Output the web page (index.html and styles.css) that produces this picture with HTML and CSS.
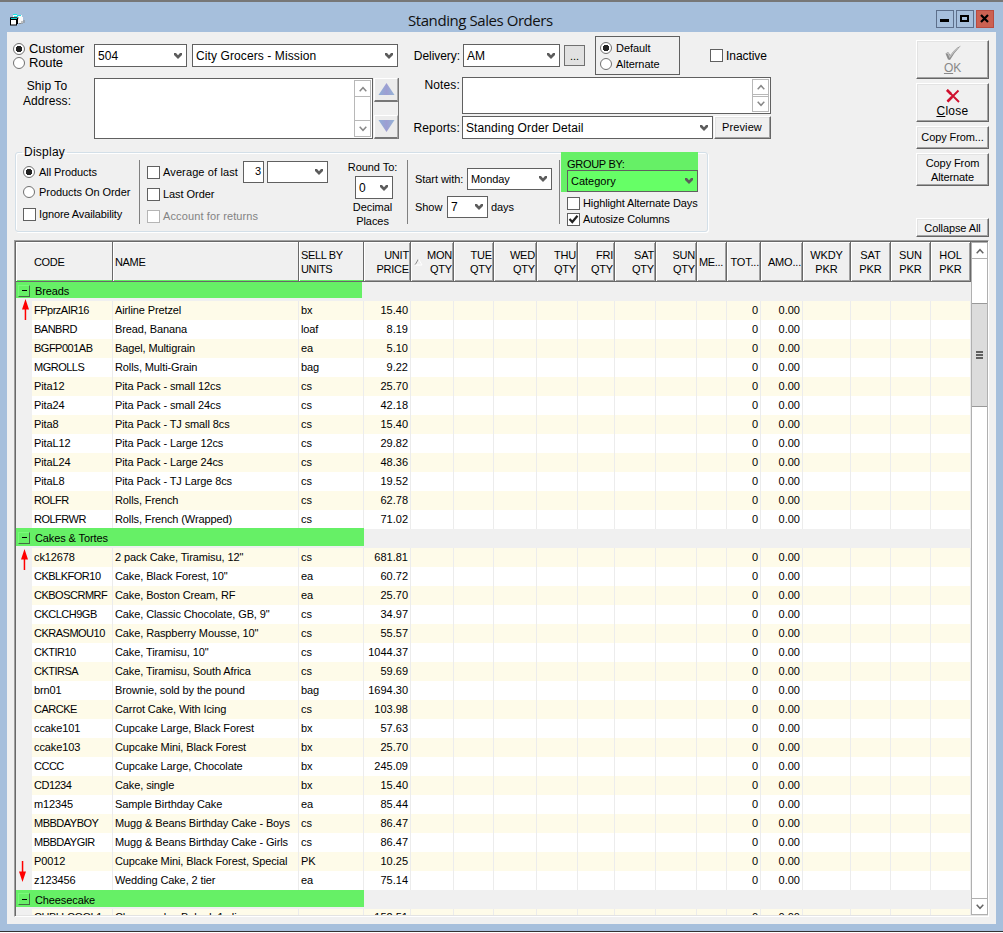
FILE: index.html
```html
<!DOCTYPE html>
<html lang="en">
<head>
<meta charset="utf-8">
<title>Standing Sales Orders</title>
<link rel="stylesheet" href="styles.css">
</head>
<body>
<svg width="0" height="0" class="defs">
  <symbol id="chev" viewBox="0 0 8 6"><path d="M0 0H2L4 2.2L6 0H8V2L4 6L0 2Z" fill="#5c5c5c"/></symbol>
  <symbol id="thin" viewBox="0 0 8 6"><path d="M.7 .8L4 4.3L7.3 .8" fill="none" stroke="currentColor" stroke-width="1.5"/></symbol>
  <symbol id="up" viewBox="0 0 7 21"><path d="M3.5 0L7 10.5H0Z M2.7 10H4.2V21H2.7Z" fill="#f00"/></symbol>
</svg>
<div class="window">
  <header class="titlebar">
    <svg class="appicon" width="17" height="14" viewBox="0 0 17 14">
      <path d="M4 2H13V4H14V10H9V6H4Z" fill="#f8f8f8"/><path d="M4 1.500H8M8 2.500H12M5 3.500H9" stroke="#1fe8e8"/>
      <path d="M13 8V11M15 7V10M10 10.500H12" stroke="#888"/>
      <rect x="1.500" y="4.500" width="8" height="1" fill="#000"/><path d="M8.500 5V11" stroke="#000"/>
      <rect x="1.500" y="5" width="6" height="7" fill="#fff" stroke="#000"/><path d="M2 5.500H8" stroke="#0cc"/><path d="M1 6.500H8" stroke="#000"/>
    </svg>
    <h1 class="title">Standing Sales Orders</h1>
    <div class="winbtns">
      <span class="winbtn"><svg width="16" height="16"><path d="M3 8H12V11H3Z"/></svg></span>
      <span class="winbtn"><svg width="16" height="16"><path d="M4 5H11V10H4Z" fill="none" stroke="#000" stroke-width="2"/></svg></span>
      <span class="winbtn close"><svg width="16" height="16"><path d="M4 4L11 11M11 4L4 11" stroke="#000" stroke-width="2.200"/></svg></span>
    </div>
  </header>
  <main class="panel">
    <section class="form">
      <div class="left">
        <div class="line1">
          <div class="mode">
            <label class="opt big"><i class="radio on"></i>Customer</label>
            <label class="opt big"><i class="radio"></i>Route</label>
          </div>
          <div class="combo w504"><span>504</span><svg class="chev"><use href="#chev"/></svg></div>
          <div class="combo wcust"><span>City Grocers - Mission</span><svg class="chev"><use href="#chev"/></svg></div>
        </div>
        <div class="line2">
          <div class="shipto">Ship To<br>Address:</div>
          <div class="area ship"><div class="sb"><b><svg><use href="#thin" class="flip"/></svg></b><b><svg><use href="#thin"/></svg></b></div></div>
          <div class="arrows">
            <b class="raised"><svg width="17" height="13"><path d="M8.500 0L16.500 12H.5Z" fill="url(#g1)"/><defs><linearGradient id="g1"><stop stop-color="#8fb0d8"/><stop offset=".5" stop-color="#9d9ed2"/><stop offset="1" stop-color="#94b4d6"/></linearGradient></defs></svg></b>
            <b class="raised"><svg width="17" height="13"><path d="M.5 0H16.500L8.500 12Z" fill="url(#g1)"/></svg></b>
          </div>
        </div>
      </div>
      <div class="middle">
        <div class="line1">
          <span class="lbl">Delivery:</span>
          <div class="combo wdel"><span>AM</span><svg class="chev"><use href="#chev"/></svg></div>
          <button class="dots">...</button>
          <div class="box">
            <label class="opt"><i class="radio on"></i>Default</label>
            <label class="opt"><i class="radio"></i>Alternate</label>
          </div>
          <label class="opt inactive"><i class="check"></i>Inactive</label>
        </div>
        <div class="notes">
          <span class="lbl">Notes:</span>
          <div class="area note"><div class="sb"><b><svg><use href="#thin" class="flip"/></svg></b><b><svg><use href="#thin"/></svg></b></div></div>
        </div>
        <div class="reports">
          <span class="lbl wide">Reports:</span>
          <div class="combo wrep"><span>Standing Order Detail</span><svg class="chev"><use href="#chev"/></svg></div>
          <button class="btn preview">Preview</button>
        </div>
      </div>
      <fieldset class="display">
        <legend>Display</legend>
        <div class="c1">
          <label class="opt"><i class="radio on"></i>All Products</label>
          <label class="opt"><i class="radio"></i>Products On Order</label>
          <label class="opt"><i class="check"></i>Ignore Availability</label>
        </div>
        <div class="c2">
          <div class="avg"><label class="opt"><i class="check"></i>Average of last</label><div class="num">3</div><div class="combo wavg"><span></span><svg class="chev"><use href="#chev"/></svg></div></div>
          <label class="opt"><i class="check"></i>Last Order</label>
          <label class="opt off"><i class="check"></i>Account for returns</label>
        </div>
        <div class="c3">Round To:<div class="combo wround"><span>0</span><svg class="chev"><use href="#chev"/></svg></div>Decimal<br>Places</div>
        <div class="c4">
          <div class="start"><span>Start with:</span><div class="combo wday"><span>Monday</span><svg class="chev"><use href="#chev"/></svg></div></div>
          <div class="start"><span>Show</span><div class="combo wshow"><span>7</span><svg class="chev"><use href="#chev"/></svg></div><span>days</span></div>
        </div>
        <div class="c5">
          <div class="group"><span>GROUP BY:</span><div class="combo wgrp"><span>Category</span><svg class="chev"><use href="#chev"/></svg></div></div>
          <label class="opt"><i class="check"></i>Highlight Alternate Days</label>
          <label class="opt"><i class="check"><svg width="11" height="11"><path d="M1.500 5L4.300 8L9.500 1.800" fill="none" stroke="#222" stroke-width="2.200"/></svg></i>Autosize Columns</label>
        </div>
      </fieldset>
      <div class="side">
        <button class="btn ok"><svg width="18" height="16"><path d="M1.500 8.500L4 7L6.500 10Q10 4.500 17 .5L10.500 8L6 15L4 14.500Z" fill="#8c8c8c"/><path d="M2.500 8.800L4 8L5.800 12Q10 6 14 2.500" fill="none" stroke="#c0c0c0" stroke-width="1.200"/></svg><span><u>O</u>K</span></button>
        <button class="btn closeb"><svg width="14" height="14"><path d="M1 1L13 13M12.500 1.500L1.500 12.500" stroke="#d0102e" stroke-width="1.900" fill="none"/><path d="M1 1L5 5M1.500 12.500L6 8" stroke="#d0102e" stroke-width="2.500"/></svg><span><u>C</u>lose</span></button>
        <button class="btn copy">Copy From...</button>
        <button class="btn alt">Copy From<br>Alternate</button>
        <button class="btn collapse">Collapse All</button>
      </div>
    </section>
    <section class="tablewrap">
      <div class="table" id="table"></div>
      <div class="vscroll">
        <b><svg><use href="#thin" class="flip"/></svg></b>
        <div class="track"><div class="thumb"><i></i><i></i><i></i></div></div>
        <b><svg><use href="#thin"/></svg></b>
      </div>
    </section>
  </main>
</div>
<script src="app.js"></script>
</body>
</html>
```
FILE: styles.css
```css
* { box-sizing: border-box; }
body { margin: 0; background: #a6bfdc; font: 11px/14px "Liberation Sans", Arial, sans-serif; letter-spacing: -.06px; color: #000; }
.defs { position: absolute; }
.window { height: 933px; border-top: 2px solid #333; border-image: linear-gradient(#777 50%, #2c2c2c 50%) 2; border-bottom: 0; display: flex; flex-direction: column; overflow: hidden; background: linear-gradient(#a6bfdc 929px, #333 929px, #333 930px, #fff 930px); }
.titlebar { height: 30px; flex: none; display: flex; align-items: center; padding: 6px 9px 0; }
.appicon { flex: none; margin-bottom: 0; }
.title { flex: 1; margin: 0 0 1px; padding-left: 382px; font: 15px/20px "Open Sans", "Noto Sans", sans-serif; letter-spacing: -.43px; color: #111; }
.winbtns { display: flex; gap: 2px; margin-top: -2px; }
.winbtn { width: 18px; height: 18px; border: 1px solid #5d6f8b; }
.winbtn svg { display: block; }
.winbtn.close { background: #cc6152; border-color: #b94b40; }
.panel { margin: 0 7px; height: 892px; background: #f0f0f0; padding: 4px 7px 0; }
.form { display: grid; grid-template-columns: 397px 500px 75px; grid-template-rows: 111px 93px; height: 204px; }
.left { padding-top: 8px; }
.line1 { display: flex; align-items: center; }
.mode { width: 81px; margin-left: -1px; flex: none; }
.opt { display: flex; align-items: center; white-space: nowrap; }
.big { font-size: 13px; letter-spacing: -.15px; }
.radio { width: 12px; height: 12px; border: 1px solid #707070; border-radius: 50%; background: #fff; margin-right: 4px; flex: none; }
.radio.on { background: radial-gradient(circle, #222 0 3px, #fff 3.5px); }
.check { width: 13px; height: 13px; border: 1px solid #606060; background: #fff; margin-right: 3px; flex: none; }
.check svg { display: block; }
.combo { display: flex; align-items: center; justify-content: space-between; background: #fff; border: 1px solid #606060; padding: 0 4px 0 3px; height: 23px; white-space: nowrap; flex: none; }
.chev { width: 8px; height: 6px; flex: none; }
.left .combo, .middle .combo { font-size: 12px; letter-spacing: .1px; }
.left .line1 { height: 23px; }
.w504 { width: 93px; margin-right: 5px; }
.wcust { width: 206px; }
.line2 { display: flex; margin-top: 11px; }
.shipto { width: 66px; margin-right: 14px; padding-top: 1px; text-align: center; font-size: 12px; line-height: 15px; letter-spacing: .1px; }
.area { background: #fff; border: 1px solid #606060; display: flex; justify-content: flex-end; padding: 1px; }
.ship { width: 279px; height: 61px; margin-right: 1px; }
.sb { width: 17px; border: 1px solid #b8b8b8; display: flex; flex-direction: column; justify-content: space-between; }
.sb b { height: 16px; display: grid; place-items: center; color: #888; border-bottom: 1px solid #b8b8b8; }
.sb b + b { border: 0; border-top: 1px solid #b8b8b8; }
.sb svg, .vscroll svg { width: 8px; height: 6px; }
.flip { transform: scaleY(-1); transform-origin: 50% 50%; }
.note .sb b { height: 15px; }
.arrows { display: flex; flex-direction: column; justify-content: space-between; width: 25px; height: 61px; border-right: 1px solid #777; }
.raised { height: 24px; display: grid; place-items: center; border: 1px solid #fff; border-right-color: #aaa; border-bottom: 2px solid #777; background: #ececec; }
.middle { padding-left: 2px; }
.middle .line1 { height: 39px; }
.lbl { width: 47px; margin-right: 3px; font-size: 12px; white-space: nowrap; flex: none; }
.middle .lbl { display: flex; justify-content: flex-end; }
.middle .wide { letter-spacing: .15px; }
.wdel { width: 97px; }
.dots { width: 21px; height: 21px; margin-left: 4px; padding: 0; background: #e1e1e1; border: 1px solid #707070; font: 11px/14px "Liberation Sans", Arial, sans-serif; color: #000; }
.box { width: 85px; height: 39px; margin-left: 10px; border: 1px solid #606060; padding: 4px 4px 3px; display: flex; flex-direction: column; gap: 2px; }
.inactive { margin-left: 30px; font-size: 12px; }
.notes { display: flex; margin-top: 2px; }
.notes .lbl { padding-top: 1px; letter-spacing: .15px; }
.note { width: 309px; height: 37px; margin-left: -1px; }
.reports { display: flex; align-items: center; margin-top: 2px; }
.wrep { width: 251px; margin-left: -1px; }
.btn { display: flex; flex-direction: column; align-items: center; justify-content: center; padding: 0; font: 11px/14px "Liberation Sans", Arial, sans-serif; letter-spacing: -.1px; color: #000; background: #f0f0f0; border: 1px solid #fff; border-right: 1px solid #666; border-bottom: 1px solid #666; box-shadow: inset -1px -1px #a3a3a3, inset 1px 1px #e3e3e3; }
.preview { width: 57px; height: 23px; margin-left: 1px; padding: 0 1px 2px 0; letter-spacing: .1px; }
.side { grid-column: 3; grid-row: 1 / 3; padding: 4px 0 0 5px; margin-right: -4px; }
.side .btn { width: 73px; margin-bottom: 4px; }
.side .ok { height: 39px; font-size: 12px; color: #888; }
.side .closeb { height: 39px; font-size: 12px; letter-spacing: .3px; padding-bottom: 2px; }
.closeb svg { margin: 3px 0 1px; }
.side .copy { height: 23px; padding-bottom: 2px; }
.side .alt { height: 33px; margin-bottom: 32px; }
.side .collapse { height: 19px; }
.display { grid-column: 1 / 3; grid-row: 2; width: 693px; height: 87px; margin: -2px 0 0 1px; padding: 0; border: 1px solid #d3dfe8; border-radius: 3px; box-shadow: inset 1px 1px #fff, 1px 1px #fff; display: flex; min-width: 0; }
.display legend { margin-left: 6px; padding: 0 2px; font-size: 12px; line-height: 14px; letter-spacing: .25px; }
.display > div { height: 64px; margin-top: 1px; }
.c1 { width: 123px; padding: 6px 0 0 7px; }
.c1 .opt { height: 12px; margin-bottom: 8px; }
.c1 .opt:last-child { padding-top: 4px; letter-spacing: -.12px; }
.c2 { width: 202px; border-left: 1px solid #808080; padding: 1px 0 0 7px; }
.avg { display: flex; }
.c2 .opt { height: 22px; }
.num { width: 21px; height: 22px; margin-left: 5px; border: 1px solid #606060; background: #fff; text-align: right; padding: 2px; }
.avg .opt { width: 91px; letter-spacing: .12px; }
.off { color: #838383; letter-spacing: .12px; }
.wavg { width: 61px; height: 22px; margin-left: 3px; }
.off .check { border-color: #b5b5b5; }
.c3 { width: 66px; padding-right: 3px; text-align: center; }
.c3 .combo { width: 38px; margin: 2px auto 1px 14px; text-align: left; font-size: 12px; }
.c4 { width: 153px; border-left: 1px solid #808080; border-right: 1px solid #808080; padding: 8px 0 0 7px; display: flex; flex-direction: column; gap: 6px; }
.start { display: flex; align-items: center; }
.start > span:first-child { width: 50px; }
.start + .start > span:first-child { width: 28px; }
.start .combo { height: 22px; }
.wday { width: 85px; margin-left: 2px; }
.wshow { width: 41px; margin: 0 3px 0 4px; font-size: 12px; }
.display > .c5 { margin-top: -7px; padding-left: 1px; }
.group { width: 137px; height: 40px; background: #66f066; padding: 7px 0 0 6px; line-height: 11px; letter-spacing: -.3px; margin-bottom: 3px; }
.wgrp { height: 22px; background: #6f6; letter-spacing: 0; }
.c5 .opt { margin-left: 6px; height: 16px; letter-spacing: -.12px; }

.tablewrap { display: flex; width: 975px; height: 677px; border: 1px solid #a0a0a0; border-right-color: #fff; border-bottom-color: #fff; box-shadow: inset 1px 1px #696969, inset 0 -1px #e3e3e3; padding: 1px 0 1px 1px; }
.table { width: 955px; overflow: hidden; letter-spacing: -.11px; }
.row { display: grid; grid-template-columns: 97px 186px 65px 47px 43px 40px 43px 41px 37px 41px 41px 30px 34px 42px 48px 40px 40px 40px; height: 19px; line-height: 18px; white-space: nowrap; }
.row > * { border-right: 1px solid #ececec; padding: 0 2px; background: #fff; }
.row.odd > * { background: #fefbe9; }
.row:last-child { line-height: 17px; }
.row > .code { border-left: 16px solid #f0f0f0; }
.row > .caps { letter-spacing: -.5px; }
.row .n { text-align: right; letter-spacing: 0; }
.row.head { height: 40px; line-height: 14px; letter-spacing: -.35px; }
.head > * { background: #f0f0f0; border: 0; border-right: 1px solid #696969; border-bottom: 1px solid #696969; box-shadow: inset 1px 1px #fff, inset -1px -1px #a0a0a0; display: flex; align-items: center; overflow: hidden; }
.head .n { letter-spacing: -.2px; }
.head > .n { justify-content: flex-end; padding: 0 1px; }
.head > .c { justify-content: center; text-align: center; letter-spacing: -.1px; }
.row.head > .code { border-left: 0; padding-left: 18px; }
.head > .mark { box-shadow: inset 1px 1px #fff, inset 0 -1px #5ff05f; }
.head svg { margin-right: auto; flex: none; margin-left: 2px; }
.sec { height: 19px; background: #f0f0f0; }
.sec div { position: relative; width: 346px; height: 16px; background: #66f066; display: flex; align-items: center; padding: 2px 0 0 2px; }
.sec.tall div { width: 348px; height: 18px; top: -1px; }
.sec.last div { width: 348px; height: 17px; }
.sec i { width: 12px; height: 12px; border: 1px solid #7bf97b; border-right: 1px solid #456b45; border-bottom: 1px solid #456b45; margin-right: 5px; margin-top: -1px; display: grid; place-items: center; }
.sec i::before { content: ""; width: 5px; height: 1px; background: #000; }
.sec svg { position: absolute; }
.vscroll { width: 17px; flex: none; border: 1px solid #b0b0b0; background: #fff; display: flex; flex-direction: column; }
.vscroll b { height: 16px; display: grid; place-items: center; color: #666; border-bottom: 1px solid #b0b0b0; }
.vscroll b:last-child { border: 0; border-top: 1px solid #b0b0b0; }
.track { flex: 1; padding-top: 44px; }
.thumb { height: 104px; background: #dcdcdc; border: 1px solid #999; border-width: 1px 0; display: flex; flex-direction: column; gap: 1px; align-items: center; justify-content: center; }
.thumb i { width: 7px; height: 2px; background: #606060; }
```
FILE: app.js
```js
const breads = `FPprzAIR16|Airline Pretzel|bx|15.40
BANBRD|Bread, Banana|loaf|8.19
BGFP001AB|Bagel, Multigrain|ea|5.10
MGROLLS|Rolls, Multi-Grain|bag|9.22
Pita12|Pita Pack - small 12cs|cs|25.70
Pita24|Pita Pack - small 24cs|cs|42.18
Pita8|Pita Pack - TJ small 8cs|cs|15.40
PitaL12|Pita Pack - Large 12cs|cs|29.82
PitaL24|Pita Pack - Large 24cs|cs|48.36
PitaL8|Pita Pack - TJ Large 8cs|cs|19.52
ROLFR|Rolls, French|cs|62.78
ROLFRWR|Rolls, French (Wrapped)|cs|71.02`;
const cakes = `ck12678|2 pack Cake, Tiramisu, 12"|cs|681.81
CKBLKFOR10|Cake, Black Forest, 10"|ea|60.72
CKBOSCRMRF|Cake, Boston Cream, RF|ea|25.70
CKCLCH9GB|Cake, Classic Chocolate, GB, 9"|cs|34.97
CKRASMOU10|Cake, Raspberry Mousse, 10"|cs|55.57
CKTIR10|Cake, Tiramisu, 10"|cs|1044.37
CKTIRSA|Cake, Tiramisu, South Africa|cs|59.69
brn01|Brownie, sold by the pound|bag|1694.30
CARCKE|Carrot Cake, With Icing|cs|103.98
ccake101|Cupcake Large, Black Forest|bx|57.63
ccake103|Cupcake Mini, Black Forest|bx|25.70
CCCC|Cupcake Large, Chocolate|bx|245.09
CD1234|Cake, single|bx|15.40
m12345|Sample Birthday Cake|ea|85.44
MBBDAYBOY|Mugg & Beans Birthday Cake - Boys|cs|86.47
MBBDAYGIR|Mugg & Beans Birthday Cake - Girls|cs|86.47
P0012|Cupcake Mini, Black Forest, Special|PK|10.25
z123456|Wedding Cake, 2 tier|ea|75.14`;
const cheese = `CHBLLCOOL1|Cheesecake, Baked, 1 slice||152.51`;

const esc = s => s.replace(/&/g, '&amp;');
const rows = text => text.split('\n').map((line, i) => {
  const [code, name, unit, price] = line.split('|').map(esc);
  const caps = /[A-Z]{2}/.test(code) ? ' caps' : '';
  return `<div class="row ${i % 2 ? '' : 'odd'}"><span class="code${caps}">${code}</span><span>${name}</span><span>${unit}</span><span class="n">${price}</span>`
    + '<span></span>'.repeat(8) + '<span class="n">0</span><span class="n">0.00</span>' + '<span></span>'.repeat(4) + '</div>';
}).join('');
const arrow = (x, y, down) => `<svg width="7" height="21" style="left:${x}px;top:${y}px"><use href="#up"${down ? ' transform="rotate(180 3.5 10.5)"' : ''} width="7" height="21"/></svg>`;
const section = (name, cls, extra) => `<div class="sec ${cls}"><div><i></i>${esc(name)}${extra}</div></div>`;
const qty = ['MON', 'TUE', 'WED', 'THU', 'FRI', 'SAT', 'SUN']
  .map((d, i) => `<span class="n">${i ? '' : '<svg width="10" height="8"><path d="M1 7L4.500 1" stroke="#888"/><path d="M4.500 1L8 7H1" fill="none" stroke="#fff"/></svg>'}<span class="n">${d}<br>QTY</span></span>`).join('');
const head = `<div class="row head"><span class="code mark">CODE</span><span class="mark">NAME</span><span class="mark">SELL BY<br>UNITS</span><span class="n"><span class="n">UNIT<br>PRICE</span></span>${qty}`
  + '<span>ME...</span><span class="n">TOT...</span><span class="n">AMO...</span>'
  + ['WKDY', 'SAT', 'SUN', 'HOL'].map(d => `<span class="c">${d}<br>PKR</span>`).join('') + '</div>';

document.getElementById('table').innerHTML = head
  + section('Breads', '', arrow(6, 17)) + rows(breads)
  + section('Cakes & Tortes', 'tall', arrow(5, 21)) + rows(cakes)
  + section('Cheesecake', 'last', arrow(3, -29, true)) + rows(cheese);
```
